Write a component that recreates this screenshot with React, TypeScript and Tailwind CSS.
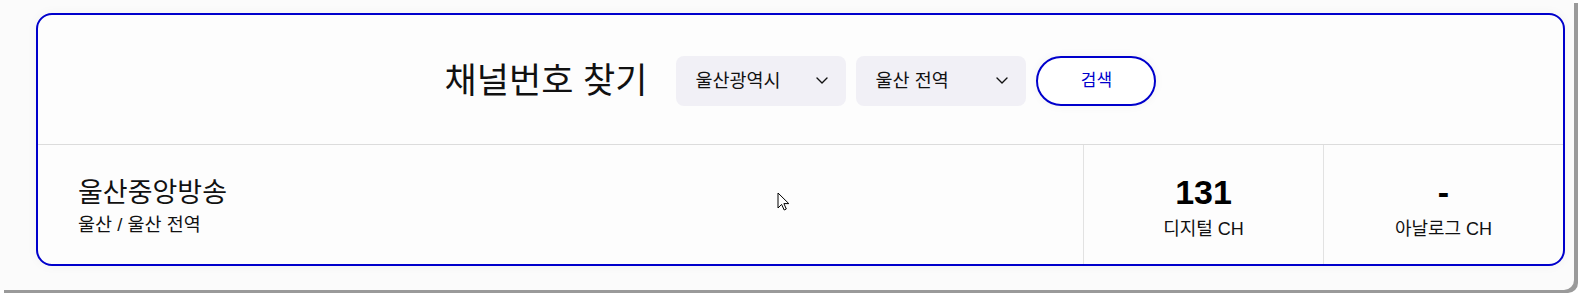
import React from "react";

const FONT = '"Liberation Sans", "Noto Sans CJK KR", sans-serif';

function Chevron() {
  return (
    <svg width="12" height="7" viewBox="0 0 12 7" fill="none">
      <polyline points="1,1 6,6 11,1" stroke="#111" strokeWidth="1.4" strokeLinecap="round" strokeLinejoin="round" />
    </svg>
  );
}

function Select({ label }: { label: string }) {
  return (
    <div className="flex h-[50px] w-[170px] items-center justify-between rounded-[8px] bg-[#f1f0f6] pl-[19px] pr-[18px]">
      <span className="text-[18.5px] text-[#111]">{label}</span>
      <Chevron />
    </div>
  );
}

export default function App() {
  return (
    <div className="h-[296px] w-[1579px] bg-white" style={{ fontFamily: FONT }}>
      <div className="h-[290px] w-[1574px] rounded-br-[10px] bg-[#fbfbfb] pl-[36px] pt-[13px] shadow-[4px_3px_0_#9a9a9a]">
        <div className="relative flex h-[253px] w-[1529px] flex-col overflow-hidden rounded-[16px] border-2 border-[#0000cc] bg-[#fdfdfd] shadow-[0_0_12px_rgba(0,0,0,0.04)]">
          <div className="flex h-[130px] items-center justify-center border-b border-[#dcdcdc] pt-[2px]">
            <h1 className="mr-[29px] text-[35px] font-normal leading-none text-[#111]">채널번호 찾기</h1>
            <div className="flex items-center gap-[10px]">
              <Select label="울산광역시" />
              <Select label="울산 전역" />
              <button className="h-[50px] w-[120px] rounded-full border-2 border-[#0000cc] bg-white text-[17px] text-[#0000cc] shadow-[0_0_10px_rgba(0,0,0,0.05)]">
                검색
              </button>
            </div>
          </div>
          <div className="flex flex-1">
            <div className="flex flex-1 flex-col justify-center pl-[40px] pt-[4px]">
              <div className="text-[27px] leading-[32px] text-[#111]">울산중앙방송</div>
              <div className="mt-[5px] text-[18.5px] leading-[22px] text-[#111]">울산 / 울산 전역</div>
            </div>
            <div className="flex w-[240px] flex-col items-center justify-center border-l border-[#e2e2e2] pt-[2px]">
              <div className="text-[34px] font-bold leading-[40px] text-black">131</div>
              <div className="mt-[6px] text-[18px] leading-[22px] text-[#111]">디지털 CH</div>
            </div>
            <div className="flex w-[240px] flex-col items-center justify-center border-l border-[#e2e2e2] pt-[2px]">
              <div className="text-[34px] font-bold leading-[40px] text-black">-</div>
              <div className="mt-[6px] text-[18px] leading-[22px] text-[#111]">아날로그 CH</div>
            </div>
          </div>
          <svg className="absolute left-[739px] top-[177px]" width="13" height="20" viewBox="0 0 13 20">
            <path d="M1 1 L1 16 L4.6 12.4 L7.2 18 L9.3 17 L6.9 11.6 L11.8 11.6 Z" fill="white" stroke="black" strokeWidth="1" strokeLinejoin="round" />
          </svg>
        </div>
      </div>
    </div>
  );
}
